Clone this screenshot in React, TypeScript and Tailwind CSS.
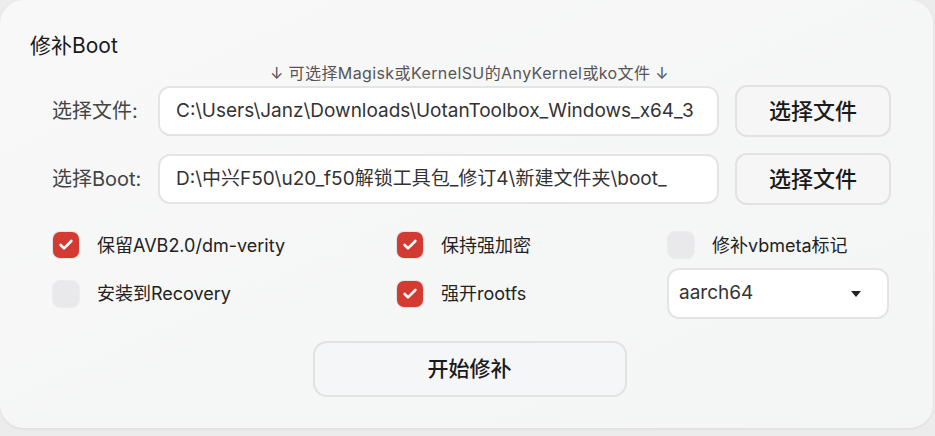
import {Check} from 'lucide-react';

const font = 'Inter, "Noto Sans CJK SC", sans-serif';

function Box({checked, label}: {checked: boolean; label: string}) {
  return (
    <div className="flex items-center gap-[17px]">
      {checked ? (
        <div className="w-[28px] h-[28px] rounded-[8px] bg-[#e4e4e6] p-[1px] flex items-center justify-center">
          <div className="w-[26px] h-[26px] rounded-[7px] bg-[#d33a31] flex items-center justify-center">
            <Check className="w-[16px] h-[16px] text-white" strokeWidth={4} />
          </div>
        </div>
      ) : (
        <div className="w-[28px] h-[28px] rounded-[8px] bg-[#e9e9eb] border border-[#ededef]" />
      )}
      <span className="text-[18px] text-[#222]">{label}</span>
    </div>
  );
}

function FileRow({label, value}: {label: string; value: string}) {
  return (
    <div className="flex items-center">
      <div className="w-[128px] pl-[22px] text-[20px] text-[#444] whitespace-nowrap">{label}</div>
      <div className="w-[561px] h-[50px] rounded-[12px] border-2 border-[#e4e4e4] bg-white flex items-center pl-[16px] pr-[4px] overflow-hidden">
        <span className="text-[19px] text-[#333] whitespace-nowrap">{value}</span>
      </div>
      <button className="ml-[16px] w-[156px] h-[52px] rounded-[12px] border-2 border-[#e2e2e2] bg-[#f6f6f6] text-[22px] font-medium text-[#1a1a1a]">
        选择文件
      </button>
    </div>
  );
}

export default function App() {
  return (
    <div className="w-[935px] h-[436px] bg-[#ececec]" style={{fontFamily: font}}>
      <div className="w-[933px] h-[428px] rounded-[24px] bg-gradient-to-br from-[#f8f8f8] to-[#f4f5f5] shadow-[0_1px_3px_rgba(0,0,0,0.08)] px-[30px] pt-[32px] flex flex-col">
        <div className="text-[21px] leading-[28px] text-[#1a1a1a]">修补Boot</div>
        <div className="mt-[3px] text-center text-[16px] leading-[20px] tracking-[0.4px] text-[#555] pl-[6px] whitespace-pre">
          {'↓ 可选择Magisk或KernelSU的AnyKernel或ko文件 ↓'}
        </div>
        <div className="mt-[2px] flex flex-col gap-[16px]">
          <FileRow label="选择文件:" value="C:\Users\Janz\Downloads\UotanToolbox_Windows_x64_3" />
          <FileRow label="选择Boot:" value="D:\中兴F50\u20_f50解锁工具包_修订4\新建文件夹\boot_" />
        </div>
        <div className="mt-[26px] grid grid-cols-[344px_271px_222px] gap-y-[20px] pl-[22px] items-center">
          <Box checked label="保留AVB2.0/dm-verity" />
          <Box checked label="保持强加密" />
          <Box checked={false} label="修补vbmeta标记" />
          <Box checked={false} label="安装到Recovery" />
          <Box checked label="强开rootfs" />
          <div className="w-[222px] h-[51px] -my-[11px] rounded-[12px] border-2 border-[#e4e4e4] bg-white flex items-center justify-between pl-[10px] pr-[26px]">
            <span className="text-[19px] text-[#333]">aarch64</span>
            <svg width="10" height="6" viewBox="0 0 10 6">
              <path d="M0 0 L10 0 L5 6 Z" fill="#222" />
            </svg>
          </div>
        </div>
        <div className="mt-[33px] flex justify-center pl-[6px]">
          <button className="w-[314px] h-[56px] rounded-[14px] border-2 border-[#e2e2e2] bg-[#f4f6f7] text-[21px] font-medium text-[#1a1a1a]">
            开始修补
          </button>
        </div>
      </div>
    </div>
  );
}
